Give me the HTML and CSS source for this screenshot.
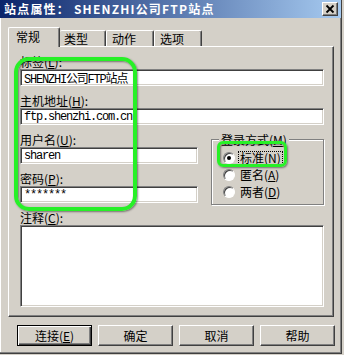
FILE: index.html
```html
<!DOCTYPE html>
<html lang="zh-CN">
  <head>
    <meta charset="UTF-8" />
    <title>站点属性</title>
    <link rel="stylesheet" href="styles.css">
  </head>

  <body>
    <div class="window">
      <div class="titlebar">
        <span class="title">站点属性： SHENZHI公司FTP站点</span>
        <span class="close">
          <svg width="14" height="12" viewBox="0 0 14 12">
            <path d="M3.5 2.5l7 7M10.5 2.5l-7 7" stroke="#000" stroke-width="1.8" fill="none" />
          </svg>
        </span>
      </div>

      <div class="tabs">
        <div class="tab active">常规</div>
        <div class="tab t2">类型</div>
        <div class="tab t3">动作</div>
        <div class="tab t4">选项</div>
      </div>

      <div class="panel">
        <div class="field first">
          <label>标签(<u>L</u>):</label>
          <input class="text" type="text" value="SHENZHI公司FTP站点" />
        </div>
        <div class="field">
          <label>主机地址(<u>H</u>):</label>
          <input class="text" type="text" value="ftp.shenzhi.com.cn" />
        </div>

        <div class="row">
          <div class="col">
            <div class="field">
              <label>用户名(<u>U</u>):</label>
              <input class="text" type="text" value="sharen" />
            </div>
            <div class="field">
              <label>密码(<u>P</u>):</label>
              <input class="text" type="text" value="*******" />
            </div>
          </div>

          <fieldset class="login">
            <legend>登录方式(<u>M</u>)</legend>
            <div class="radio"><span class="circle checked"></span><span class="focus">标准(<u>N</u>)</span></div>
            <div class="radio"><span class="circle"></span><span class="txt">匿名(<u>A</u>)</span></div>
            <div class="radio"><span class="circle"></span><span class="txt">两者(<u>D</u>)</span></div>
          </fieldset>
        </div>

        <div class="field note">
          <label>注释(<u>C</u>):</label>
          <textarea class="memo"></textarea>
        </div>
      </div>

      <div class="buttons">
        <button class="btn default">连接(<u>E</u>)</button>
        <button class="btn">确定</button>
        <button class="btn">取消</button>
        <button class="btn">帮助</button>
      </div>

      <!-- 截图上的绿色标注框 -->
      <div class="mark big"></div>
      <div class="mark small"></div>
    </div>
  </body>
</html>
```

FILE: styles.css
```css
* {
  margin: 0;
  padding: 0;
  box-sizing: border-box;
}

body {
  background: #d4d0c8;
  font: 12px "Noto Sans CJK SC", "Liberation Sans", sans-serif;
  color: #000;
}

u {
  text-decoration: underline;
}

.window {
  position: relative;
  width: 342px;
  height: 354px;
  background: #d4d0c8;
  border-right: 1px solid #404040;
  border-bottom: 1px solid #404040;
  box-shadow: inset -1px -1px #808080, inset 1px 0 #fff;
}

.titlebar {
  display: flex;
  align-items: center;
  justify-content: space-between;
  height: 18px;
  padding: 0 3px 0 4px;
  background: linear-gradient(to right, #0a246a, #a6caf0);
  color: #fff;
}
.title {
  font-weight: 700;
  line-height: 18px;
  letter-spacing: 1.2px;
  white-space: nowrap;
}
.close {
  display: flex;
  align-items: center;
  justify-content: center;
  width: 16px;
  height: 14px;
  background: #d4d0c8;
  border: 1px solid;
  border-color: #fff #404040 #404040 #fff;
  box-shadow: inset -1px -1px #808080;
}

/* 选项卡 */
.tabs {
  display: flex;
  align-items: flex-end;
  height: 19px;
  margin: 9px 0 0 8px;
}
.tab {
  height: 16px;
  padding-left: 5px;
  line-height: 15px;
  background: #d4d0c8;
  border-top: 1px solid #fff;
  border-left: 1px solid #fff;
  border-right: 1px solid #404040;
  border-radius: 2px 2px 0 0;
  box-shadow: inset -1px 0 #808080;
}
.tab.active {
  position: relative;
  z-index: 1;
  width: 52px;
  height: 20px;
  margin-bottom: -1px;
  padding-left: 7px;
  line-height: 17px;
}
.t2 {
  width: 46px;
  border-left: 0;
  padding-left: 4px;
}
.t3,
.t4 {
  width: 48px;
}

.panel {
  width: 326px;
  height: 271px;
  margin-left: 8px;
  padding: 8px 9px 0 11px;
  border-top: 1px solid #fff;
  border-left: 1px solid #fff;
  border-right: 1px solid #404040;
  border-bottom: 1px solid #404040;
  box-shadow: inset -1px -1px #808080;
}

.field {
  margin-top: 8px;
}
.field.first {
  margin-top: 0;
}
.field label {
  display: block;
  height: 13px;
  line-height: 13px;
  white-space: nowrap;
}
.text,
.memo {
  display: block;
  width: 100%;
  margin-top: 1px;
  background: #fff;
  border: 1px solid;
  border-color: #808080 #fff #fff #808080;
  box-shadow: inset 1px 1px #404040, inset -1px -1px #d4d0c8;
  outline: none;
}
.text {
  height: 17px;
  padding: 0 2px 0 3px;
  font: 12px "Liberation Mono", "Noto Sans CJK SC", monospace;
  letter-spacing: -1.2px;
}
.memo {
  height: 82px;
  resize: none;
}

.row {
  display: flex;
  align-items: flex-start;
  justify-content: space-between;
}
.col {
  width: 178px;
}

.login {
  width: 113px;
  height: 72px;
  margin-top: 8px;
  padding: 3px 0 0 11px;
  border: 1px solid #808080;
  box-shadow: 1px 1px #fff, inset 1px 1px #fff;
}
.login legend {
  position: relative;
  margin-left: -4px;
  padding: 0 2px;
  line-height: 13px;
  background: #d4d0c8;
}
.radio {
  display: flex;
  align-items: center;
  height: 17px;
}
.circle {
  position: relative;
  width: 12px;
  height: 12px;
  margin-right: 3px;
  background: #fff;
  border: 1px solid;
  border-color: #808080 #fff #fff #808080;
  border-radius: 50%;
  box-shadow: inset 1px 1px #404040;
}
.circle.checked::after {
  content: "";
  position: absolute;
  left: 3px;
  top: 3px;
  width: 4px;
  height: 4px;
  background: #000;
  border-radius: 50%;
}
.focus {
  padding: 0 1px;
  line-height: 12px;
  border: 1px dotted #000;
}
.txt {
  padding-left: 2px;
}

.field.note {
  margin-top: 6px;
}

.buttons {
  display: flex;
  gap: 6px;
  margin: 8px 0 0 17px;
}
.btn {
  width: 75px;
  height: 21px;
  font: 12px "Noto Sans CJK SC", "Liberation Sans", sans-serif;
  background: #d4d0c8;
  border: 1px solid;
  border-color: #fff #404040 #404040 #fff;
  box-shadow: inset -1px -1px #808080;
}
.btn.default {
  border: 1px solid #000;
  box-shadow: inset 1px 1px #fff, inset -1px -1px #404040, inset -2px -2px #808080;
}

/* 绿色标注 */
.mark {
  position: absolute;
  border: 4px solid #27f027;
  box-shadow: 1px 1px 2px rgba(0, 0, 0, 0.45), inset 1px 1px 2px rgba(0, 0, 0, 0.45);
}
.mark.big {
  left: 14px;
  top: 57px;
  width: 123px;
  height: 154px;
  border-radius: 15px;
}
.mark.small {
  left: 217px;
  top: 141px;
  width: 70px;
  height: 26px;
  border-width: 3px;
  border-radius: 6px;
}
```
